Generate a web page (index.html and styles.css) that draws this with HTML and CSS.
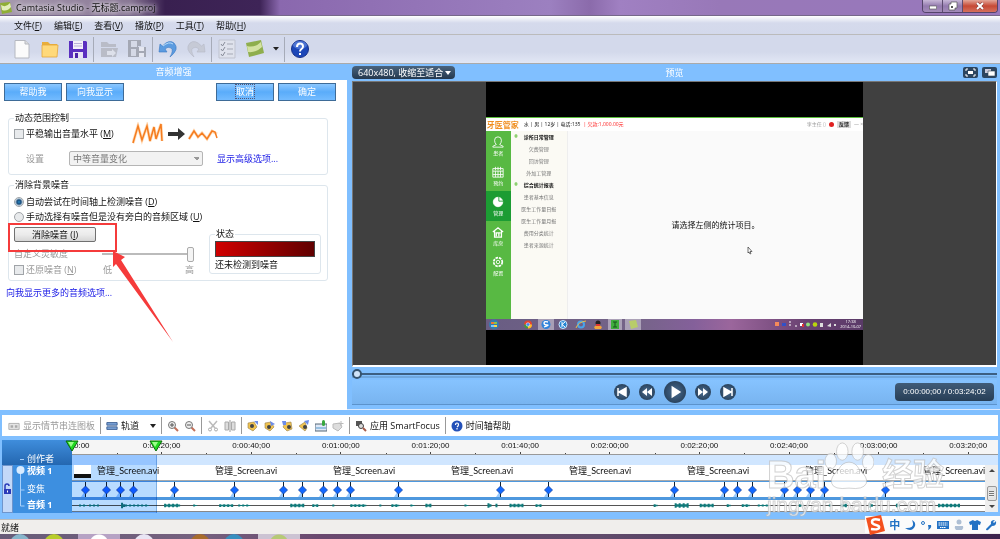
FILE: index.html
```
<!DOCTYPE html>
<html lang="zh-CN">
<head>
    <meta charset="UTF-8">
    <meta name="viewport" content="width=device-width, initial-scale=1.0">
    <title>Camtasia Studio - 无标题.camproj</title>
    <link rel="stylesheet" href="styles.css">
</head>
<body>
<div class="app">
    <header class="titlebar">
        <svg class="logo" viewBox="0 0 12 12"><path d="M0 1l10-1 2 10-10 2z" fill="#8fae35"/><path d="M1 3q5 3 9-2l1 4q-4 5-9 3z" fill="#e3eebb"/></svg>
        <h1>Camtasia Studio - 无标题.camproj</h1>
        <div class="window-buttons">
            <button aria-label="最小化"><svg viewBox="0 0 20 12"><rect x="6.500" y="6" width="7" height="3" fill="#fff" stroke="#555" stroke-width=".6"/></svg></button>
            <button aria-label="还原"><svg viewBox="0 0 20 12"><path d="M8 2h6v6h-2v2H6V4h2z" fill="#fff" stroke="#555" stroke-width=".7"/><path d="M8 6h2v2H8z" fill="#555"/></svg></button>
            <button class="close" aria-label="关闭"><svg viewBox="0 0 20 12"><path d="M7 3l6 6M13 3L7 9" stroke="#733" stroke-width="3"/><path d="M7 3l6 6M13 3L7 9" stroke="#fff" stroke-width="2"/></svg></button>
        </div>
    </header>

    <nav class="menubar">
        <a href="#">文件(<u>F</u>)</a>
        <a href="#">编辑(<u>E</u>)</a>
        <a href="#">查看(<u>V</u>)</a>
        <a href="#">播放(<u>P</u>)</a>
        <a href="#">工具(<u>T</u>)</a>
        <a href="#">帮助(<u>H</u>)</a>
    </nav>

    <div class="toolbar">
        <button aria-label="新建"><svg viewBox="0 0 20 20"><path d="M3 1.500h10l4 3.500v14H3z" fill="#fbfbfb" stroke="#b5b8c0"/><path d="M13 1.500V5h4" fill="#ddd" stroke="#b5b8c0"/></svg></button>
        <button aria-label="打开"><svg viewBox="0 0 20 20"><path d="M2 3h6l2 2h7v4H2z" fill="#e9ae3a"/><path d="M2 6h16l-1 12H2z" fill="#ffd97a" stroke="#e3a63a" stroke-width=".8"/></svg></button>
        <button aria-label="保存"><svg viewBox="0 0 20 20"><path d="M1 2h17l1 1v16H1z" fill="#5a2fc0"/><path d="M5 2h10v8H5z" fill="#f4f0fa"/><path d="M5 13h10v6H5z" fill="#e8e3f5"/><path d="M7 14h3v5H7z" fill="#4a22a8"/><path d="M6 4.500h8M6 7h8" stroke="#b9b0d8"/></svg></button>
        <i class="sep"></i>
        <button aria-label="导入"><svg viewBox="0 0 20 20"><path d="M2 3h6l2 2h7v3H2zM2 9h17l-2 9H2z" fill="#b9bcc7"/><path d="M8 12h5v-2l4 4-4 4v-2H8z" fill="#dde0ea"/></svg></button>
        <button aria-label="生成"><svg viewBox="0 0 20 20"><path d="M1 1h13v6h-3v11H1z" fill="#a4a8b4"/><path d="M4 2h6v6H4zM4 10h6v7H4z" fill="#d5d9e6"/><path d="M9 8h10v10H9z" fill="#a4a8b4"/><path d="M12 8h5v4h-5zM12 14h5v4h-5z" fill="#e5e7f0"/></svg></button>
        <i class="sep"></i>
        <button aria-label="撤销"><svg viewBox="0 0 20 20"><path d="M1 13l1-8 2.500 2Q11 0 16 4q6 6-4 14 4-7 1-9-3-2-6 1l2 3z" fill="#5b9be0" stroke="#3a78c2" stroke-width=".6"/><path d="M5 7q6-5 10-2" stroke="#b9dcf8" fill="none"/></svg></button>
        <button aria-label="重做"><svg viewBox="0 0 20 20"><path d="M19 13l-1-8-2.500 2Q9 0 4 4q-6 6 4 14-4-7-1-9 3-2 6 1l-2 3z" fill="#c6cad6" stroke="#b5b9c6" stroke-width=".6"/></svg></button>
        <i class="sep"></i>
        <button aria-label="选项"><svg viewBox="0 0 20 20"><path d="M2 1h16v18H2z" fill="#dfe2ec" stroke="#bfc3cf"/><path d="M4 5l1.500 2L8 3M4 10l1.500 2L8 8M4 15l1.500 2L8 13" stroke="#868b98" fill="none"/><path d="M10 5h6M10 10h6M10 15h6" stroke="#a5a9b5"/></svg></button>
        <button aria-label="录制"><svg viewBox="0 0 20 20"><path d="M1 4l15-3 3 13-15 4z" fill="#8fae4d"/><path d="M2 7q8 2 14-4l1 5q-6 6-14 5z" fill="#d4e2a2"/></svg></button>
        <button class="drop" aria-label="更多"><svg viewBox="0 0 6 4"><path d="M0 0h6L3 3.500z" fill="#222"/></svg></button>
        <i class="sep"></i>
        <button aria-label="帮助"><svg viewBox="0 0 20 20"><circle cx="10" cy="10" r="8.500" fill="#1c47b8" stroke="#16308a"/><ellipse cx="10" cy="6" rx="7" ry="4" fill="#6d93e6" opacity=".6"/><path d="M7 8q0-3.500 3-3.500t3 3q0 1.500-1.500 2.500T10 12.500M10 14v2" stroke="#fff" stroke-width="2" fill="none"/></svg></button>
    </div>

    <main class="workspace">
        <section class="panel">
            <h2>音频增强</h2>
            <div class="actions">
                <button class="blue-btn">帮助我</button>
                <button class="blue-btn">向我显示</button>
                <button class="blue-btn push"><span class="focus">取消</span></button>
                <button class="blue-btn">确定</button>
            </div>

            <fieldset class="group">
                <legend>动态范围控制</legend>
                <div class="line">
                    <input type="checkbox" id="level"><label for="level">平稳输出音量水平 (<u>M</u>)</label>
                    <svg class="wave-demo" viewBox="0 0 88 24"><g fill="none" stroke="#ffc58b" stroke-width="3" opacity=".6"><path d="M1 21L6 4l4 14 5-14 3 15 4-14 2 12 5-15 1 17"/><path d="M57 17l5-8 4 6 4-4 5 6 5-8 5 3"/></g><g fill="none" stroke="#f57c1f" stroke-width="1.500"><path d="M1 21L6 4l4 14 5-14 3 15 4-14 2 12 5-15 1 17"/><path d="M57 17l5-8 4 6 4-4 5 6 5-8 3 1 2 6"/></g><path d="M36 10h10V6l7 6-7 6v-4H36z" fill="#333"/></svg>
                </div>
                <div class="line indent">
                    <label class="off setting" for="preset">设置</label>
                    <select id="preset" disabled><option>中等音量变化</option></select>
                    <a href="#">显示高级选项...</a>
                </div>
            </fieldset>

            <fieldset class="group noise">
                <legend>消除背景噪音</legend>
                <div class="line"><input type="radio" name="mode" id="auto" checked><label for="auto">自动尝试在时间轴上检测噪音 (<u>D</u>)</label></div>
                <div class="line"><input type="radio" name="mode" id="manual"><label for="manual">手动选择有噪音但是没有旁白的音频区域 (<u>U</u>)</label></div>
                <div class="noise-body">
                    <div class="noise-left">
                        <button class="gray-btn">消除噪音 (<u>I</u>)</button>
                        <div class="sens off">
                            <label for="sens">自定义灵敏度</label>
                            <input type="range" id="sens" value="100" disabled>
                        </div>
                        <div class="restore off">
                            <input type="checkbox" id="restore" disabled><label for="restore">还原噪音 (<u>N</u>)</label>
                            <span class="low">低</span><span class="high">高</span>
                        </div>
                    </div>
                    <fieldset class="status-box">
                        <legend>状态</legend>
                        <div class="meter"></div>
                        <p>还未检测到噪音</p>
                    </fieldset>
                </div>
            </fieldset>
            <a class="more" href="#">向我显示更多的音频选项...</a>
            <div class="highlight"></div>
            <svg class="arrow" viewBox="0 0 62 92"><path d="M1 0l12 6-4 3 52 82L4 13l-3 3z" fill="#f53b3b"/></svg>
        </section>

        <section class="preview">
            <div class="preview-head">
                <button class="zoom-btn">640x480, 收缩至适合 <svg viewBox="0 0 6 4"><path d="M0 0h6L3 4z" fill="#fff"/></svg></button>
                <h2>预览</h2>
                <div class="minis">
                    <button class="mini" aria-label="全屏"><svg viewBox="0 0 15 11"><path d="M3 4V2h2M10 2h2v2M12 7v2h-2M5 9H3V7" stroke="#fff" fill="none"/><path d="M5 4h5v3H5z" fill="#fff"/></svg></button>
                    <button class="mini" aria-label="分离"><svg viewBox="0 0 15 11"><path d="M3 2h6v4H3z" fill="#ccd"/><path d="M6 4h7v5H6z" fill="#fff" stroke="#345" stroke-width=".6"/></svg></button>
                </div>
            </div>
            <div class="stage">
                <div class="video">
                    <div class="screen">
                        <div class="s-head">
                            <b>牙医管家</b><span>水 | 男 | 12岁 | 电话:135</span><em>| 欠款:1,000.00元</em>
                            <small>李主任 ▯</small><i class="alert"></i><strong>反馈</strong><small>— ×</small>
                        </div>
                        <div class="s-body">
                            <ul class="s-nav">
                                <li><svg viewBox="0 0 14 14"><path d="M7 1q4 0 4 4 0 3-2 5l4 2v1H1v-1l4-2Q3 8 3 5q0-4 4-4z"/></svg>患者</li>
                                <li><svg viewBox="0 0 14 14"><path d="M1 3h12v10H1zM1 6h12M4 1v4M7 1v4M10 1v4M4 6v7M7 6v7M10 6v7M1 10h12"/></svg>预约</li>
                                <li class="on"><svg viewBox="0 0 14 14"><circle cx="7" cy="7" r="5.500" fill="#fff"/><path d="M8 1v5h5" stroke="#1c9c33"/></svg>管理</li>
                                <li><svg viewBox="0 0 14 14"><path d="M1 7l6-5 6 5M3 6v7h8V6M5 12V8h3v4M8 8h2" stroke-width="1.500"/></svg>库房</li>
                                <li><svg viewBox="0 0 14 14"><circle cx="7" cy="7" r="2"/><circle cx="7" cy="7" r="5" stroke-width="2" stroke-dasharray="3 1"/></svg>配置</li>
                            </ul>
                            <ul class="s-menu">
                                <li class="head">诊所日常管理</li><li>欠费管理</li><li>回访管理</li><li>外加工管理</li>
                                <li class="head">综合统计报表</li><li>患者基本信息</li><li>医生工作量日报</li><li>医生工作量月报</li><li>费用分类统计</li><li>患者来源统计</li>
                            </ul>
                            <div class="s-main"><p>请选择左侧的统计项目。</p><svg viewBox="0 0 6 8"><path d="M1 0v6l1-1 1 2 1-.5-1-2h2z" fill="#fff" stroke="#333" stroke-width=".7"/></svg></div>
                        </div>
                        <div class="s-task">
                            <svg class="dock" viewBox="0 0 160 11"><circle cx="8" cy="5.500" r="5" fill="#377cae"/><path d="M5 3h3v2H5z" fill="#f07830"/><path d="M8 3h3v2H8z" fill="#8bc34a"/><path d="M5 6h3v2H5z" fill="#7cc8ff"/><path d="M8 6h3v2H8z" fill="#ffd54a"/><g fill="#fff" opacity=".4"><path d="M52 0h16v11H52zM122 0h14v11h-14zM139 0h16v11h-16z"/></g><circle cx="42" cy="5.500" r="4" fill="#e5442f"/><path d="M42 5.500h4a4 4 0 0 1-4 4z" fill="#fbc02d"/><path d="M38 5.500h4v4a4 4 0 0 1-4-4z" fill="#3a9c46"/><circle cx="42" cy="5.500" r="1.800" fill="#4285f4" stroke="#fff" stroke-width=".5"/><circle cx="60" cy="5.500" r="4.500" fill="#2f84dc"/><path d="M62 3q-4-1-4 1t3 2-3 2" stroke="#fff" fill="none" stroke-width="1.300"/><circle cx="77" cy="5.500" r="4" fill="#2485d3" stroke="#cfeaff"/><path d="M76 3v5M79 3l-3 2.500L79 8" stroke="#fff" fill="none"/><circle cx="95" cy="5.500" r="3" fill="none" stroke="#48a5ec" stroke-width="2"/><path d="M90 9Q92 3 100 2" stroke="#e9bd44" fill="none"/><circle cx="112" cy="4" r="2.500" fill="#222"/><path d="M108 8q4-4 8 0l-1 2h-6z" fill="#f2a43b"/><path d="M110 5h4v2h-4z" fill="#d33"/><path d="M125 1h8v9h-8z" fill="#3fae3c"/><path d="M127 3h4M129 3v5M127 8h4" stroke="#17531a"/><path d="M143 2l7-1 2 7-7 2z" fill="#b8cc6a"/></svg>
                            <svg class="tray" viewBox="0 0 64 11"><path d="M1 3h4v4H1z" fill="#f58a5a"/><path d="M8 4h4v3H8z" fill="#3150c8"/><path d="M15 3h2M15 6h2M21 7h2" stroke="#fff"/><path d="M26 4h3v3h-3z" fill="#fff"/><path d="M28 5h2v3h-2z" fill="#d33"/><circle cx="34" cy="5.500" r="2" fill="#8fe07b"/><circle cx="41" cy="5.500" r="2.300" fill="#b9d40c"/><path d="M46 4h3v4h-3z" fill="#ddd"/><path d="M53 7l4-3v4zM60 5h2v2h-2z" fill="#ddd"/></svg>
                            <time>17:38<br>2014-10-07</time>
                        </div>
                    </div>
                </div>
            </div>
            <input class="scrub" type="range" value="0" aria-label="播放位置">
            <div class="player">
                <div class="buttons">
                    <button aria-label="开头"><svg viewBox="0 0 16 16"><path d="M4 4v8M12 4v8L5 8z" fill="#fff" stroke="#fff" stroke-width="1.500"/></svg></button>
                    <button aria-label="后退"><svg viewBox="0 0 16 16"><path d="M8 4v8L3 8zM13 4v8L8 8z" fill="#fff"/></svg></button>
                    <button class="play" aria-label="播放"><svg viewBox="0 0 16 16"><path d="M5.500 3.500l7 4.500-7 4.500z" fill="#fff"/></svg></button>
                    <button aria-label="前进"><svg viewBox="0 0 16 16"><path d="M8 4v8l5-4zM3 4v8l5-4z" fill="#fff"/></svg></button>
                    <button aria-label="结尾"><svg viewBox="0 0 16 16"><path d="M12 4v8M4 4v8l7-4z" fill="#fff" stroke="#fff" stroke-width="1.500"/></svg></button>
                </div>
                <output class="clock">0:00:00;00 / 0:03:24;02</output>
            </div>
        </section>
    </main>

    <section class="timeline">
        <div class="tl-tools">
            <button class="story off"><svg viewBox="0 0 14 10"><path d="M1 2h12v7H1z" fill="#e5e5e5" stroke="#aaa"/><path d="M3 4h3v3H3zM8 4h3v3H8z" fill="#aaa"/></svg>显示情节串连图板</button>
            <i class="sep"></i>
            <button class="tracks-btn"><svg viewBox="0 0 14 10"><path d="M1 1h12v3H1zM1 6h12v3H1z" fill="#7ba3d8" stroke="#36598d"/></svg>轨道<svg class="caret" viewBox="0 0 6 4"><path d="M0 0h6L3 4z" fill="#222"/></svg></button>
            <i class="sep"></i>
            <button aria-label="放大"><svg viewBox="0 0 12 12"><path d="M7 7l4 4" stroke="#c3705a" stroke-width="2"/><circle cx="5" cy="5" r="3.500" fill="#eee" stroke="#777"/><path d="M3 5h4M5 3v4" stroke="#555"/></svg></button>
            <button aria-label="缩小"><svg viewBox="0 0 12 12"><path d="M7 7l4 4" stroke="#c3705a" stroke-width="2"/><circle cx="5" cy="5" r="3.500" fill="#eee" stroke="#777"/><path d="M3 5h4" stroke="#555"/></svg></button>
            <i class="sep"></i>
            <button aria-label="剪切"><svg viewBox="0 0 12 12"><path d="M2 1l6 7M10 1L4 8" stroke="#bbb" stroke-width="1.500"/><circle cx="3" cy="9.500" r="1.500" fill="none" stroke="#aaa"/><circle cx="9" cy="9.500" r="1.500" fill="none" stroke="#aaa"/></svg></button>
            <button aria-label="分割"><svg viewBox="0 0 12 12"><path d="M1 2h3.500v8H1zM7.500 2H11v8H7.500z" fill="#ddd" stroke="#aaa"/><path d="M6 0v12" stroke="#999"/></svg></button>
            <i class="sep"></i>
            <button aria-label="音量"><svg viewBox="0 0 12 12"><path d="M1 3l6-1 3 5-4 4-5-3z" fill="#f0c350" stroke="#98804a" stroke-width=".6"/><circle cx="5" cy="6" r="2" fill="#444"/><path d="M7 1h4v4z" fill="#6d8de8"/></svg></button>
            <button aria-label="淡入"><svg viewBox="0 0 12 12"><path d="M1 3l6-1 3 5-4 4-5-3z" fill="#f0c350" stroke="#98804a" stroke-width=".6"/><circle cx="5" cy="7" r="2" fill="#444"/><path d="M6 1l5 3-4 2z" fill="#6d8de8"/></svg></button>
            <button aria-label="淡出"><svg viewBox="0 0 12 12"><path d="M4 3l6-1 1 7-5 2-4-4z" fill="#f0c350" stroke="#98804a" stroke-width=".6"/><circle cx="8" cy="7" r="2" fill="#444"/><path d="M1 1h4v4H2z" fill="#6d8de8"/></svg></button>
            <button aria-label="调低"><svg viewBox="0 0 12 12"><path d="M1 6l6-4 2 6-2 3z" fill="#f0c350" stroke="#98804a" stroke-width=".6"/><circle cx="7" cy="7" r="2" fill="#444"/><path d="M6 1l5-1-1 5z" fill="#6d8de8"/></svg></button>
            <button aria-label="旁白"><svg viewBox="0 0 12 12"><path d="M0 4h12v7H0z" fill="#dfe9f7" stroke="#567"/><path d="M1 8h10" stroke="#59c"/><rect x="7" y="0" width="3" height="6" rx="1.500" fill="#37a83f"/></svg></button>
            <button aria-label="静音"><svg viewBox="0 0 12 12"><path d="M1 4l7-1 2 4-4 4-5-3z" fill="#ddd" stroke="#bbb"/><path d="M9 1v5M6.500 3.500h5" stroke="#bbb"/></svg></button>
            <i class="sep"></i>
            <button class="focus-btn"><svg viewBox="0 0 12 12"><path d="M1 1h6v5H1z" fill="#555"/><circle cx="6" cy="6" r="2.500" fill="#ddd" stroke="#444"/><path d="M8 8l3 3" stroke="#a65b4a" stroke-width="2"/></svg>应用 SmartFocus</button>
            <i class="sep"></i>
            <button class="help-btn"><svg viewBox="0 0 12 12"><circle cx="6" cy="6" r="5.500" fill="#2350b8"/><path d="M4.500 5q0-2 1.500-2t1.500 1.500T6 7M6 8v1.500" stroke="#fff" fill="none" stroke-width="1.200"/></svg>时间轴帮助</button>
        </div>

        <div class="tl-grid">
            <div class="tl-names">
                <div class="creator">创作者</div>
                <div class="name-rows">
                    <div class="lock"><svg viewBox="0 0 8 12"><path d="M2 6V3q0-2 2-2t2 2" stroke="#2a3ab8" fill="none" stroke-width="1.500"/><path d="M1 6h7v5H1z" fill="#2a3ab8"/><path d="M4 7.500h1v2H4z" fill="#fff"/></svg></div>
                    <svg class="tree" viewBox="0 0 14 47"><path d="M7.500 4v37h4M7.500 25h4" stroke="#a9d0fa" fill="none"/><circle cx="7.500" cy="5" r="4" fill="#d8ebff"/></svg>
                    <ul><li class="bold cut">视频 1</li><li>变焦</li><li class="bold">音频 1</li></ul>
                </div>
            </div>
            <div class="tl-area">
                <div class="ruler"><span class="first">0:00</span><span>0:00:20;00</span><span>0:00:40;00</span><span>0:01:00;00</span><span>0:01:20;00</span><span>0:01:40;00</span><span>0:02:00;00</span><span>0:02:20;00</span><span>0:02:40;00</span><span>0:03:00;00</span><span>0:03:20;00</span></div>
                <div class="creator-row"></div>
                <div class="tracks">
                    <div class="lanes">
                        <div class="clips"><i class="thumb"></i><span>管理_Screen.avi</span><span>管理_Screen.avi</span><span>管理_Screen.avi</span><span>管理_Screen.avi</span><span>管理_Screen.avi</span><span>管理_Screen.avi</span><span>管理_Screen.avi</span><span>管理_Screen.avi</span></div>
                        <div class="keys" id="keys"></div>
                        <svg class="audio" id="audio" viewBox="0 0 912 12" preserveAspectRatio="none"></svg>
                    </div>
                    <div class="scroll"><i class="up"></i><i class="thumb-v"></i><i class="down"></i></div>
                </div>
                <div class="selection"></div>
                <svg class="marker in" viewBox="0 0 14 12"><path d="M1 1h12L7 11z" fill="#20d820" stroke="#0a6a0a"/><path d="M3 2h6L6 7z" fill="#9bff8a"/></svg>
                <svg class="marker out" viewBox="0 0 14 12"><path d="M1 1h12L7 11z" fill="#20d820" stroke="#0a6a0a"/><path d="M3 2h6L6 7z" fill="#9bff8a"/></svg>
            </div>
        </div>
    </section>

    <footer class="statusbar">就绪</footer>
    <div class="taskbar"><i class="orb"></i><i class="yellow"></i><i class="tile"></i><i class="dot"></i><i class="ring"></i><i class="ie"></i><i class="tile green"></i></div>

    <div class="watermark">
        <div class="brand"><span>Bai</span><svg viewBox="0 0 52 50"><g><ellipse cx="7" cy="20" rx="6" ry="8"/><ellipse cx="19" cy="10" rx="6" ry="9"/><ellipse cx="35" cy="10" rx="6" ry="9"/><ellipse cx="46" cy="21" rx="6" ry="8"/><path d="M26 21q7 0 11 8 9 8 7 14-3 7-18 5-16 2-18-5-2-6 7-14 4-8 11-8z"/></g></svg><span>经验</span></div>
        <div class="url">jingyan.baidu.com</div>
    </div>

    <div class="ime">
        <svg class="sogou" viewBox="0 0 20 20"><path d="M1 3l15-3 4 16-15 4z" fill="#f4511e"/><path d="M15 5q-8-2-8 2 0 2 4 3t3 3-8 1" stroke="#fff" stroke-width="2.500" fill="none"/></svg>
        <b>中</b>
        <svg viewBox="0 0 12 12"><path d="M8 1q4 9-7 8 7 5 10-2 1-4-3-6z"/></svg>
        <svg viewBox="0 0 12 12"><circle cx="3" cy="4" r="1.500" fill="none" stroke="#2372c4"/><path d="M8 6h3q1 3-3 5 1-2 0-5z"/></svg>
        <svg viewBox="0 0 12 12"><path d="M0 2h12v8H0z"/><path d="M1.500 4h9M1.500 6h9M3 8.500h6" stroke="#fff" stroke-dasharray="1.500 .5"/></svg>
        <svg class="dim" viewBox="0 0 12 12"><circle cx="6" cy="3" r="2.500"/><path d="M2 7h8q1 2-1 4H3q-2-2-1-4z"/></svg>
        <svg viewBox="0 0 12 12"><path d="M0 3l4-2q2 2 4 0l4 2-1 3-2-.5V11H3V5.500L1 6z"/></svg>
        <svg viewBox="0 0 12 12"><path d="M1 10l5-5q-1-4 4-4L8 3l1 1 2-2q1 5-4 5l-4 4q-2 1-2-1z"/></svg>
    </div>
</div>
<script src="script.js"></script>
</body>
</html>
```

FILE: styles.css
```
* {
    box-sizing: border-box;
}

body {
    margin: 0;
    font-family: "Open Sans", "Noto Sans CJK SC", sans-serif;
    font-size: 9px;
    line-height: 12px;
    color: #111;
}

h1, h2, p, ul, fieldset {
    margin: 0;
    padding: 0;
    font-size: inherit;
    font-weight: normal;
}

ul {
    list-style: none;
}

button {
    font: inherit;
    color: inherit;
    padding: 0;
    border: 0;
    background: none;
    white-space: nowrap;
}

svg {
    display: block;
    flex: none;
}

.app {
    position: relative;
    display: flex;
    flex-direction: column;
    height: 100vh;
    overflow: hidden;
    background: #80bfff;
}

.off {
    color: #999;
}

/* title bar */
.titlebar {
    display: flex;
    height: 16px;
    flex: none;
    border-bottom: 1px solid #76688a;
    background: linear-gradient(90deg, #a79baf 0, #897795 130px, #392050 165px, #3e2457 260px, #8a68ae 280px, #9c80c0 55%, #8b6bab 59%, #a080c2 62%, #9878b8 72%, #9878bc);
}

.logo {
    width: 12px;
    height: 12px;
    margin: 2px 4px 0 0;
}

.titlebar h1 {
    line-height: 15px;
    text-shadow: 0 0 4px #fff, 0 0 6px #fff;
    white-space: nowrap;
}

.window-buttons {
    display: flex;
    width: 76px;
    height: 13px;
    margin-left: auto;
    margin-right: 2px;
    border: 1px solid #54446a;
    border-top: 0;
    border-radius: 0 0 4px 4px;
    overflow: hidden;
}

.window-buttons button {
    width: 20px;
    background: linear-gradient(#c8b8d8, #937aae 50%, #a48cba);
    border-right: 1px solid #5d4c70;
}

.window-buttons .close {
    flex: 1;
    border: 0;
    background: linear-gradient(#e3a79a, #c64935 50%, #d6705c);
}

.window-buttons svg {
    width: 20px;
    height: 12px;
    margin: auto;
}

/* menu and main toolbar */
.menubar {
    display: flex;
    gap: 12px;
    flex: none;
    height: 19px;
    padding: 4px 14px;
    background: linear-gradient(#fff, #d5daec 7px, #d3d9eb);
    border-bottom: 1px solid #bbb;
}

.menubar a {
    color: #111;
    text-decoration: none;
}

.toolbar {
    display: flex;
    align-items: center;
    gap: 8px;
    flex: none;
    height: 29px;
    padding-left: 12px;
    border-bottom: 1px solid #aaa;
    background: linear-gradient(#d3d9eb 60%, #e2e7f5);
}

.toolbar button, .toolbar svg {
    width: 20px;
    height: 20px;
}

.toolbar .sep {
    width: 1px;
    height: 25px;
    margin: 0 -3px;
    background: #a6abb8;
}

.toolbar .drop, .toolbar .drop svg {
    width: 6px;
    height: 4px;
}

/* audio panel */
.workspace {
    display: flex;
    flex: 1;
    min-height: 0;
}

.panel {
    position: relative;
    width: 347px;
    flex: none;
    background: #fff;
}

.panel h2 {
    height: 16px;
    line-height: 16px;
    text-align: center;
    color: #fff;
    background: #80bfff;
}

.actions {
    display: flex;
    gap: 4px;
    padding: 3px 11px 3px 4px;
}

.blue-btn {
    width: 58px;
    height: 18px;
    color: #fff;
    border: 1px solid #3e6b97;
    background: linear-gradient(#8bc7ff, #5aacfa 50%, #73bbff);
}

.push {
    margin-left: auto;
}

.focus {
    border: 1px dotted #557;
}

.group {
    min-width: 0;
    margin: 8px 19px 0 8px;
    padding: 2px 6px 8px 5px;
    border: 1px solid #dde6ed;
    border-radius: 3px;
}

legend {
    height: 12px;
    margin: 0;
    padding: 0 1px;
}

.line {
    display: flex;
    align-items: center;
    height: 15px;
}

.line input, .restore input {
    appearance: none;
    width: 10px;
    height: 10px;
    margin: 0 2px 0 0;
    border: 1px solid #a0a4a8;
    background: #e8eaec;
}

.line input[type="radio"] {
    border-radius: 50%;
}

.line input:checked {
    background: radial-gradient(#2a8cc8 0, #174a7a 2px, #dfe8ee 4px);
}

.wave-demo {
    width: 88px;
    height: 24px;
    margin-left: 18px;
}

.indent {
    margin-top: 10px;
    padding-left: 12px;
}

.setting {
    width: 43px;
}

select {
    appearance: none;
    width: 134px;
    height: 15px;
    padding: 0 3px;
    font: inherit;
    color: #777;
    opacity: 1;
    border: 1px solid #b5b5b5;
    border-radius: 2px;
    background: linear-gradient(45deg, transparent 50%, #999 50%) 124px 5px / 3px 3px no-repeat, linear-gradient(-45deg, transparent 50%, #999 50%) 127px 5px / 3px 3px no-repeat, #f2f2f2;
}

a {
    color: #1a1ae6;
    text-decoration: none;
}

.indent a {
    margin-left: 14px;
}

.noise {
    margin-top: 4px;
    padding-top: 3px;
    padding-bottom: 4px;
}

.noise-body {
    display: flex;
    justify-content: space-between;
}

.noise-left {
    width: 180px;
    padding-top: 3px;
}

.gray-btn {
    display: block;
    width: 82px;
    height: 15px;
    border: 1px solid #707070;
    border-radius: 2px;
    background: linear-gradient(#f3f3f3, #ebebeb 50%, #d6d6d6);
}

.sens {
    display: flex;
    align-items: center;
    height: 20px;
    margin-top: 2px;
}

.sens input {
    appearance: none;
    width: 92px;
    height: 16px;
    margin: 0 0 0 auto;
    background: linear-gradient(#bbb, #bbb) center / 100% 2px no-repeat;
}

.sens input::-webkit-slider-thumb {
    appearance: none;
    width: 7px;
    height: 15px;
    border: 1px solid #aaa;
    border-radius: 2px;
    background: #f4f4f4;
}

.restore {
    display: flex;
    align-items: center;
}

.low {
    margin-left: auto;
}

.high {
    margin-left: 73px;
}

.status-box {
    width: 112px;
    height: 46px;
    margin-top: 4px;
    padding: 1px 5px;
    border: 1px solid #dde6ed;
    border-radius: 3px;
}

.meter {
    height: 16px;
    border: 1px solid #444;
    background: linear-gradient(90deg, #d00000, #600000);
}

.status-box p {
    margin-top: 2px;
}

.more {
    display: block;
    margin: 6px;
}

.highlight {
    position: absolute;
    left: 8px;
    top: 159px;
    width: 109px;
    height: 29px;
    border: 2px solid #f53b3b;
}

.arrow {
    position: absolute;
    left: 112px;
    top: 187px;
    width: 62px;
    height: 92px;
}

/* preview */
.preview {
    display: flex;
    flex-direction: column;
    flex: 1;
    min-width: 0;
    padding: 0 3px 4px 5px;
    border-bottom: 1px solid #dceaff;
    background: #80bfff;
}

.preview-head {
    display: grid;
    grid-template-columns: 1fr auto 1fr;
    align-items: center;
    height: 17px;
}

.preview-head h2 {
    color: #fff;
}

.zoom-btn {
    display: flex;
    align-items: center;
    justify-content: space-between;
    width: 103px;
    height: 13px;
    padding: 0 4px 0 6px;
    border-radius: 4px;
    color: #fff;
    background: linear-gradient(#49637d, #24384e);
}

.zoom-btn svg {
    width: 6px;
    height: 4px;
}

.minis {
    display: flex;
    justify-content: flex-end;
    gap: 4px;
}

.mini {
    width: 15px;
    height: 11px;
    border-radius: 2px;
    background: #2c4560;
}

.stage {
    display: flex;
    justify-content: center;
    flex: 1;
    min-height: 0;
    border: 1px solid #777;
    border-bottom: 2px solid #fff;
    border-right-color: #fff;
    background: #404040;
}

.video {
    display: flex;
    align-items: center;
    height: 100%;
    aspect-ratio: 4 / 3;
    background: #000;
}

.screen {
    display: flex;
    flex-direction: column;
    width: 100%;
    aspect-ratio: 16 / 9;
    border-top: 1px solid #5cc03d;
    background: #fafafa;
    font-size: 5px;
    line-height: 7px;
}

.s-head {
    display: flex;
    align-items: center;
    gap: 3px;
    height: 13px;
    padding-left: 1px;
    white-space: nowrap;
    background: #fff;
}

.s-head b {
    margin-right: 2px;
    font-size: 8px;
    color: #f09022;
}

.s-head em {
    margin-right: auto;
    font-style: normal;
    color: #f22;
}

.s-head small {
    font-size: 5px;
    color: #999;
}

.s-head strong {
    padding: 0 2px;
    background: #ddd;
}

.alert {
    width: 5px;
    height: 5px;
    border-radius: 50%;
    background: #e02020;
}

.s-body {
    display: flex;
    flex: 1;
    min-height: 0;
}

.s-nav {
    width: 25px;
    background: #58b943;
}

.s-nav li {
    display: flex;
    flex-direction: column;
    align-items: center;
    gap: 2px;
    height: 30px;
    padding-top: 5px;
    color: #fff;
}

.s-nav .on {
    background: #1c9c33;
}

.s-nav svg {
    width: 12px;
    height: 12px;
    fill: none;
    stroke: #fff;
}

.s-menu {
    width: 57px;
    text-align: center;
    color: #777;
    background: #fbfaf4;
    border-right: 1px solid #eee;
}

.s-menu li {
    height: 12px;
    line-height: 12px;
}

.s-menu .head {
    font-weight: bold;
    color: #111;
    background: radial-gradient(#8ed070 1px, transparent 2px) 1px 0 / 8px 10px no-repeat;
}

.s-main {
    display: flex;
    flex-direction: column;
    align-items: center;
    justify-content: center;
    gap: 16px;
    flex: 1;
    padding-top: 24px;
    font-size: 8px;
    line-height: 12px;
}

.s-main svg {
    width: 6px;
    height: 8px;
    margin-left: 70px;
}

.s-task {
    display: flex;
    align-items: center;
    height: 11px;
    color: #fff;
    background: linear-gradient(90deg, #695d83, #756488 40%, #84609a 55%, #9b669c 65%, #694171 85%, #5a3a68);
}

.dock {
    width: 160px;
    height: 11px;
    margin-right: auto;
}

.tray {
    width: 64px;
    height: 11px;
}

.s-task time {
    width: 25px;
    font-size: 4px;
    line-height: 5px;
    text-align: center;
}

.scrub {
    appearance: none;
    width: 100%;
    height: 12px;
    margin: 1px 0 0;
    background: linear-gradient(#3c5f83, #3c5f83) 0 5px / 100% 2px no-repeat, linear-gradient(#6fa7df, #6fa7df) 0 8px / 100% 2px no-repeat;
}

.scrub::-webkit-slider-thumb {
    appearance: none;
    width: 10px;
    height: 10px;
    border: 2px solid #35536f;
    border-radius: 50%;
    background: #cfe3f8;
}

.player {
    display: grid;
    grid-template-columns: 1fr auto 1fr;
    align-items: center;
    height: 25px;
    border-bottom: 1px solid #5c93cc;
    background: linear-gradient(#86c3ff, #78b4f0);
}

.buttons {
    display: flex;
    align-items: center;
    gap: 9px;
    grid-column: 2;
}

.buttons button {
    width: 16px;
    height: 16px;
    border-radius: 50%;
    background: radial-gradient(#4a6d92, #1e3349);
}

.buttons .play, .buttons .play svg {
    width: 22px;
    height: 22px;
}

.clock {
    justify-self: end;
    width: 99px;
    height: 18px;
    margin-right: 3px;
    line-height: 18px;
    text-align: center;
    font-family: "Liberation Sans", sans-serif;
    font-size: 8px;
    color: #fff;
    border-radius: 4px;
    background: linear-gradient(#405c78, #273e56);
}

/* timeline */
.timeline {
    flex: none;
    padding: 5px 2px 6px;
    background: #80bfff;
}

.tl-tools {
    display: flex;
    align-items: center;
    gap: 5px;
    height: 21px;
    padding-left: 6px;
    background: #fff;
}

.tl-tools button {
    display: flex;
    align-items: center;
    gap: 3px;
}

.tl-tools svg {
    width: 12px;
    height: 12px;
}

.tl-tools .caret {
    width: 6px;
    height: 4px;
    margin-left: 8px;
}

.tl-tools .sep {
    width: 1px;
    height: 17px;
    background: #999;
}

.tl-grid {
    display: flex;
    margin-top: 4px;
}

.tl-names {
    display: flex;
    flex-direction: column;
    width: 70px;
    flex: none;
    color: #fff;
    background: #3d8fe0;
}

.creator {
    height: 25px;
    padding: 13px 0 0 25px;
    background: linear-gradient(#a9d0fa, #a9d0fa) 18px 19px / 4px 1px no-repeat, linear-gradient(#3f8ddc, #2467b0);
}

.name-rows {
    display: flex;
    flex: 1;
}

.name-rows li {
    height: 16px;
    line-height: 16px;
}

.name-rows .cut {
    line-height: 11px;
}

.tree {
    width: 14px;
    height: 47px;
}

.bold {
    font-weight: bold;
}

.lock {
    display: flex;
    align-items: center;
    width: 11px;
    border: 1px solid #6f95cc;
    background: #c3d8f8;
}

.lock svg {
    width: 8px;
    height: 12px;
}

.tl-area {
    position: relative;
    flex: 1;
    min-width: 0;
}

.ruler {
    display: grid;
    grid-template-columns: 4.84% repeat(10, 9.68%);
    height: 15px;
    overflow: hidden;
    text-align: center;
    font-family: "Liberation Sans", sans-serif;
    font-size: 8px;
    line-height: 12px;
    border-bottom: 1px solid #999;
    background: #f5f5f5;
}

.ruler span {
    background: linear-gradient(#444, #444) center bottom / 1px 2px no-repeat, linear-gradient(#444, #444) left bottom / 1px 1px no-repeat;
}

.ruler .first {
    padding-left: 2px;
    text-align: left;
    background: none;
}

.creator-row {
    height: 10px;
    background: #d0e6ff;
}

.tracks {
    display: flex;
}

.lanes {
    flex: 1;
    min-width: 0;
    background: #4e98de;
}

.clips {
    position: relative;
    display: flex;
    height: 16px;
    padding-left: 25px;
    font-family: Lato, "Noto Sans CJK SC", sans-serif;
    line-height: 12px;
    overflow: hidden;
    border-bottom: 1px solid #aaa;
    background: #fff;
}

.clips span {
    flex: 0 0 118px;
}

.clips span:last-child {
    flex-basis: auto;
}

.thumb {
    position: absolute;
    z-index: 1;
    left: 2px;
    top: 0;
    width: 17px;
    height: 13px;
    background: linear-gradient(#fff 9px, #111 9px);
}

.keys {
    position: relative;
    height: 15px;
    margin-top: 1px;
    background: #fff;
}

.key {
    position: absolute;
    top: 0;
    width: 9px;
    height: 15px;
    margin-left: -4px;
}

.audio {
    width: 100%;
    height: 12px;
    margin-top: 3px;
    background: #fff;
    border-bottom: 1px solid #888;
}

.scroll {
    display: flex;
    flex-direction: column;
    align-items: center;
    justify-content: space-between;
    width: 13px;
    padding: 4px 0;
    background: #eee;
}

.up, .down {
    border: 3px solid transparent;
    border-top: 0;
    border-bottom: 3px solid #444;
}

.down {
    border-top: 3px solid #444;
    border-bottom: 0;
}

.thumb-v {
    width: 10px;
    height: 15px;
    margin-top: 10px;
    border: 1px solid #999;
    border-radius: 2px;
    background: repeating-linear-gradient(#777 0 1px, #eee 1px 2px) center / 5px 6px no-repeat, #e4e4e4;
}

.selection {
    position: absolute;
    left: 0;
    top: 15px;
    bottom: 0;
    width: 85px;
    border-right: 1px solid #7eb0e4;
    background: #b8dbff;
    mix-blend-mode: multiply;
}

.marker {
    position: absolute;
    top: -1px;
    width: 14px;
    height: 14px;
}

.in {
    left: -7px;
}

.out {
    left: 77px;
}

.statusbar {
    flex: none;
    height: 15px;
    padding: 2px 1px;
    border-top: 1px solid #bbb;
    background: #f0eeec;
}

.taskbar {
    display: flex;
    gap: 14px;
    flex: none;
    height: 5px;
    padding-left: 10px;
    overflow: hidden;
    background: linear-gradient(90deg, #675b78, #76617f 20%, #6a486f 32%, #604b6b 60%, #3c234d);
}

.taskbar i {
    width: 20px;
    height: 20px;
    border-radius: 50%;
    background: #87b5cb;
}

.taskbar .yellow {
    background: #b8cd2b;
}

.taskbar .tile {
    width: 42px;
    border-radius: 0;
    background: radial-gradient(circle at 50% 10px, #fff 9px, #b6a2c4 10px);
}

.taskbar .dot {
    background: #e9e5f4;
}

.taskbar .ring {
    margin-left: 22px;
    background: #a86c2c;
}

.taskbar .ie {
    background: #388fbf;
}

.taskbar .green {
    background: radial-gradient(circle at 50% 10px, #b6c976 9px, #ccc3d3 10px);
}

/* overlays */
.watermark {
    position: absolute;
    right: 56px;
    bottom: 23px;
    width: 177px;
    color: rgba(255, 255, 255, .75);
    -webkit-text-stroke: 1px rgba(180, 180, 180, .6);
}

.brand {
    display: flex;
    align-items: flex-end;
    justify-content: space-between;
    font-size: 38px;
    font-weight: bold;
    line-height: 38px;
    font-family: "Liberation Sans", "Noto Sans CJK SC", sans-serif;
}

.brand span:last-child {
    font-size: 31px;
}

.brand svg {
    width: 50px;
    height: 56px;
    margin-left: -10px;
    fill: rgba(255, 255, 255, .75);
    stroke: rgba(180, 180, 180, .6);
}

.url {
    font-size: 21px;
    line-height: 22px;
    font-family: "Liberation Sans", sans-serif;
}

.ime {
    position: absolute;
    right: 0;
    bottom: 6px;
    display: flex;
    align-items: center;
    justify-content: space-between;
    width: 135px;
    height: 17px;
    padding-right: 3px;
    background: #fbfbfb;
    color: #2372c4;
    font-size: 11px;
}

.ime svg {
    width: 12px;
    height: 12px;
    fill: #2372c4;
}

.ime .sogou {
    width: 20px;
    height: 20px;
}

.ime .dim {
    fill: #aebfd4;
}
```

FILE: script.js
```
const LANE = 912;
const keyframes = [13, 34, 48, 61, 102, 162, 211, 230, 251, 265, 278, 326, 428, 475, 601, 651, 664, 679, 711, 724, 737, 751, 812];
// [start, length, height] of each loud part
const sounds = [[8, 8, 2], [18, 10, 2], [50, 4, 6], [54, 24, 2], [93, 16, 4], [122, 3, 2], [148, 14, 3], [167, 12, 2], [219, 14, 4], [241, 5, 3], [261, 2, 2], [279, 16, 3], [308, 2, 2], [320, 8, 3], [339, 4, 2], [354, 6, 4], [393, 4, 2], [416, 3, 5], [424, 2, 4], [438, 14, 4], [464, 5, 3], [582, 4, 3], [603, 14, 5], [628, 14, 4], [655, 4, 3], [670, 7, 3], [686, 12, 2], [727, 4, 3], [757, 2, 2], [769, 5, 4], [797, 3, 5], [824, 3, 4], [866, 22, 4]];

const keys = document.querySelector("#keys");
keyframes.forEach(x => {
    const key = document.createElement("span");
    key.className = "key";
    key.style.left = (x / LANE * 100) + "%";
    key.innerHTML = '<svg viewBox="0 0 9 15" width="9" height="15"><path d="M4 9L0 15h4z" fill="#9bcbff"/><path d="M4.500 0v15" stroke="#123"/><path d="M4.500 4L8.500 8l-4 4-4-4z" fill="#1268ff" stroke="#0a3a9a" stroke-width=".7"/></svg>';
    keys.appendChild(key);
});

let d = "";
sounds.forEach(([x, w, h]) => {
    for (let i = 0; i < w; i += 2) {
        const y = i % 4 ? h / 2 : h;
        d += `M${x + i} ${6 - y / 2}v${y}`;
    }
});
document.querySelector("#audio").innerHTML = `<path d="M0 6h912" stroke="#555"/><path d="${d}" stroke="#117a7a" stroke-width="2"/>`;
```
